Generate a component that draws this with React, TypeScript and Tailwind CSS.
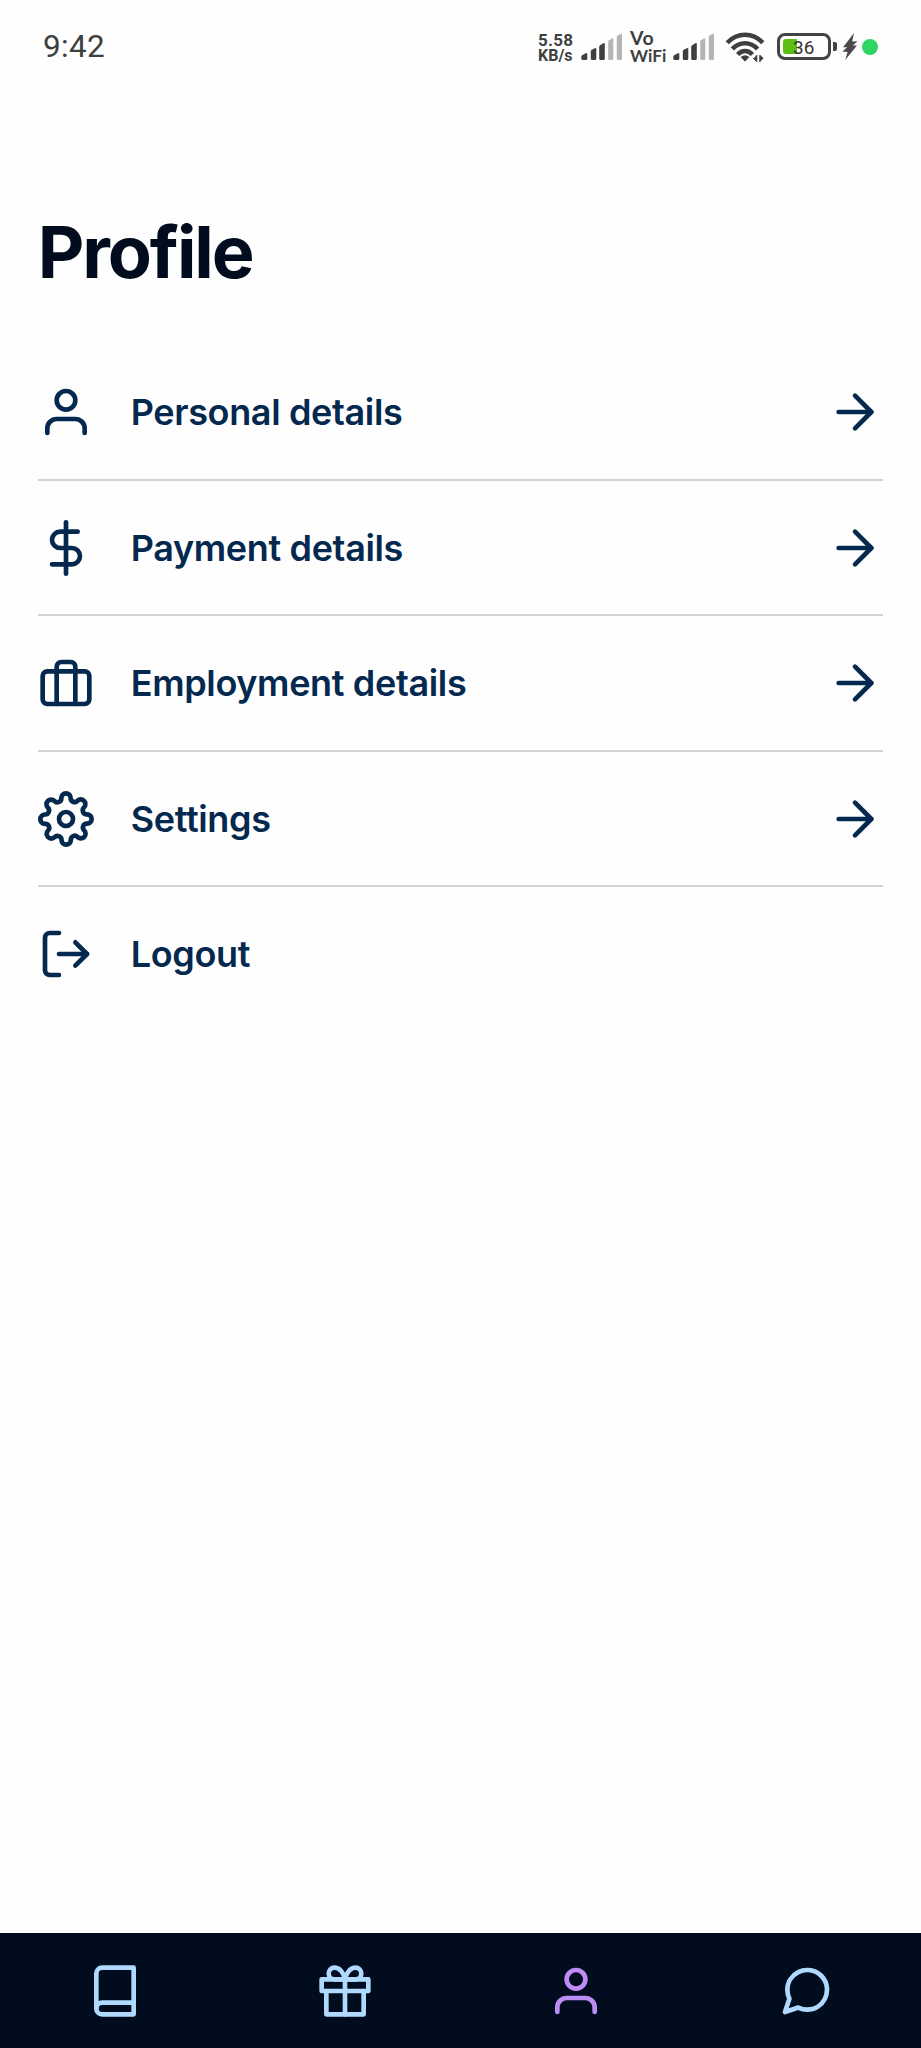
import type { IconType } from "react-icons";
import {
  FiArrowRight,
  FiBook,
  FiBriefcase,
  FiDollarSign,
  FiGift,
  FiLogOut,
  FiMessageCircle,
  FiSettings,
  FiUser,
} from "react-icons/fi";

type MenuEntry = { label: string; Icon: IconType; arrow: boolean };

const menu: MenuEntry[] = [
  { label: "Personal details", Icon: FiUser, arrow: true },
  { label: "Payment details", Icon: FiDollarSign, arrow: true },
  { label: "Employment details", Icon: FiBriefcase, arrow: true },
  { label: "Settings", Icon: FiSettings, arrow: true },
  { label: "Logout", Icon: FiLogOut, arrow: false },
];

const tabs: { name: string; Icon: IconType; active: boolean }[] = [
  { name: "book", Icon: FiBook, active: false },
  { name: "gift", Icon: FiGift, active: false },
  { name: "profile", Icon: FiUser, active: true },
  { name: "chat", Icon: FiMessageCircle, active: false },
];

function Signal() {
  return (
    <svg className="h-[28px] w-[42px] shrink-0" viewBox="0 0 42 28">
      <g fill="#3f3f3f">
        <path d="M0.3 23.6Q0.5 22.6 1.5 22L4.8 20.2Q6.3 19.6 6.3 21.2V25.8Q6.3 27 5 27H2Q0.3 27 0.3 25.5Z" />
        <path d="M9.8 18.4Q9.8 17.4 10.7 16.8L13.8 15.2Q15.3 14.6 15.3 16.2V25.8Q15.3 27 14 27H11.2Q9.8 27 9.8 25.8Z" />
        <path d="M18.2 14Q18.2 13 19.1 12.3L22.3 10.2Q23.8 9.5 23.8 11.1V25.8Q23.8 27 22.5 27H19.7Q18.2 27 18.2 25.8Z" />
      </g>
      <g fill="#b5b5b5">
        <path d="M27.2 8.6Q27.2 7.8 28 7.3L31 5.4Q32.3 4.8 32.3 6.3V25.8Q32.3 27 31 27H28.4Q27.2 27 27.2 25.8Z" />
        <path d="M35.8 3.8Q35.8 3 36.6 2.4L39.7 0.8Q41 0.2 41 1.7V25.8Q41 27 39.7 27H37Q35.8 27 35.8 25.8Z" />
      </g>
    </svg>
  );
}

function Wifi() {
  return (
    <svg className="h-[30px] w-[42px] shrink-0" viewBox="0 0 42 30">
      <g fill="none" stroke="#3f3f3f" strokeWidth="4.5">
        <path d="M2.2 10.8C12.5 0.2 27.5 0.2 37.8 10.8" />
        <path d="M7.4 17C14.4 9.2 25.6 9.2 32.6 17" />
        <path d="M12.6 22.6C16.8 17.8 23.2 17.8 27.4 22.6" />
      </g>
      <path d="M15.6 25Q20 21.6 24.4 25L20.9 28.8Q20 29.8 19.1 28.8Z" fill="#3f3f3f" />
      <path d="M31.8 23V29.6L28.4 26.4M34.8 30V23.2L38.3 26.5" fill="#3f3f3f" stroke="#3f3f3f" strokeWidth="1" />
    </svg>
  );
}

function Battery() {
  return (
    <div className="flex shrink-0 items-center gap-[2px]">
      <div className="relative flex h-[27px] w-[54px] items-center rounded-[8px] border-[3px] border-[#434343] p-[3px]">
        <div className="h-[15px] w-[14px] rounded-l-[3px] bg-[#5cbf12]" />
        <span className="absolute left-[13px] top-[1px] font-[Roboto] text-[19px] leading-[21px] text-[#333]">
          36
        </span>
      </div>
      <div className="h-[9px] w-[4px] rounded-r-[2px] bg-[#434343]" />
    </div>
  );
}

function StatusBar() {
  return (
    <header className="flex h-[93px] items-center pl-[43px] pr-[43px] text-[#3f3f3f]">
      <span className="font-[Roboto] text-[31.5px] font-[450] leading-[36px] tracking-[0.3px]">9:42</span>
      <div className="ml-auto flex items-center">
        <div className="flex w-[43px] flex-col pt-[2px] font-[Roboto] font-bold">
          <span className="text-[17px] leading-[16px] tracking-[0.3px]">5.58</span>
          <span className="text-[16px] leading-[16px]">KB/s</span>
        </div>
        <Signal />
        <div className="ml-[7px] flex w-[43px] flex-col font-[Lato] font-bold">
          <span className="text-[19.5px] leading-[18px] tracking-[0.4px]">Vo</span>
          <span className="text-[17.2px] leading-[18px]">WiFi</span>
        </div>
        <Signal />
        <div className="ml-[10px] mr-[10px] flex">
          <Wifi />
        </div>
        <Battery />
        <svg className="ml-[5px] h-[27px] w-[16px] shrink-0" viewBox="0 0 16 27">
          <path d="M12 0L1 14.2H5.2L0.3 18.6L5.6 19L3.2 27L15 12.4H10.8L15.5 8.2L10.2 8.4Z" fill="#4a4a4a" />
        </svg>
        <span className="ml-[4px] h-[16px] w-[16px] rounded-full bg-[#2fd565]" />
      </div>
    </header>
  );
}

export default function App() {
  return (
    <div className="flex h-[2048px] w-[921px] flex-col bg-[#fefefe] font-[Inter]">
      <StatusBar />
      <main className="flex-1 px-[37.7px] pt-[114px]">
        <h1 className="h-[138.3px] text-[72px] font-bold leading-[90px] tracking-[-2.1px] text-[#010d1e]">Profile</h1>
        <ul>
          {menu.map(({ label, Icon, arrow }) => (
            <li
              key={label}
              className="flex h-[135.5px] items-center border-b-2 border-[#d2d2d2] text-[#05284f] last:border-transparent"
            >
              <Icon className="size-[56px] shrink-0" />
              <span className="ml-[37px] text-[36px] font-semibold leading-[44px] tracking-[-0.35px]">{label}</span>
              {arrow && <FiArrowRight className="ml-auto size-[56px] shrink-0" />}
            </li>
          ))}
        </ul>
      </main>
      <nav className="grid h-[115px] grid-cols-4 place-items-center bg-[#010d1e]">
        {tabs.map(({ name, Icon, active }) => (
          <button key={name} className={active ? "text-[#bd8cf5]" : "text-[#b0d9ff]"}>
            <Icon className="size-[56px]" />
          </button>
        ))}
      </nav>
    </div>
  );
}
